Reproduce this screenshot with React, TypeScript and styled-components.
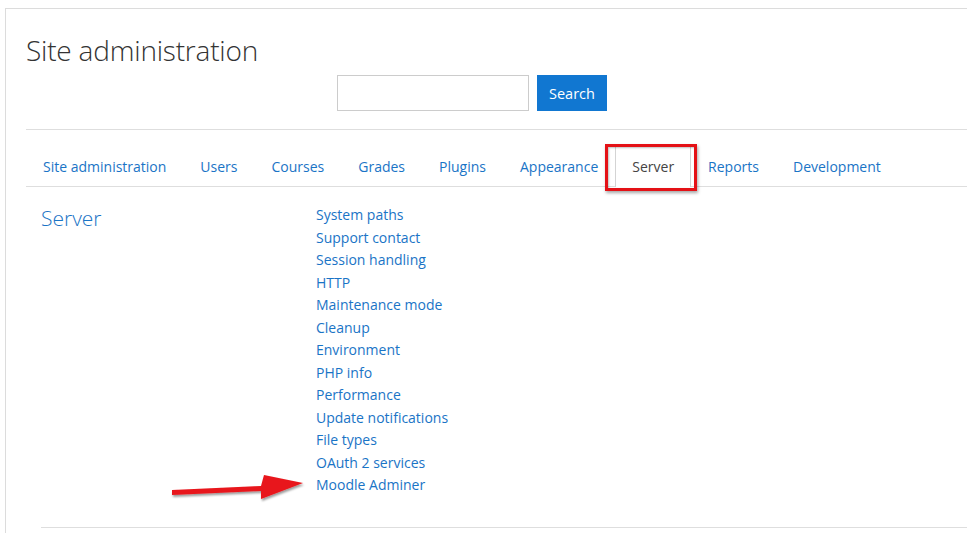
import React, { FC } from "react";
import styled, { createGlobalStyle } from "styled-components";

const GlobalStyle = createGlobalStyle`
  html, body {
    margin: 0;
    padding: 0;
    background: #fff;
    font-family: "Open Sans", "Liberation Sans", sans-serif;
    color: #373a3c;
    overflow: hidden;
  }
`;

const Card = styled.div`
  margin: 8px 0 0 5px;
  border-top: 1px solid #dcdcdc;
  border-left: 1px solid #dcdcdc;
  padding: 0 0 0 20px;
  height: 540px;
`;

const Title = styled.h1`
  margin: 0;
  padding-top: 23px;
  font-size: 28px;
  font-weight: 300;
  line-height: 36px;
  color: #333;
  letter-spacing: -0.2px;
`;

const SearchRow = styled.form`
  display: flex;
  gap: 8px;
  margin: 7px 0 0 311px;
  height: 36px;
`;

const SearchInput = styled.input`
  width: 192px;
  height: 36px;
  box-sizing: border-box;
  border: 1px solid #ccc;
  padding: 0 8px;
`;

const SearchButton = styled.button`
  width: 70px;
  height: 36px;
  border: none;
  background: #1177d1;
  color: #fff;
  font-family: inherit;
  font-size: 14.5px;
  cursor: pointer;
`;

const Tabs = styled.ul`
  list-style: none;
  margin: 18px 0 0;
  padding: 16px 0 0;
  display: flex;
  border-top: 1px solid #dedede;
  border-bottom: 1px solid #dedede;
`;

const Tab = styled.li<{ active?: boolean }>`
  position: relative;
  height: ${(p) => (p.active ? "41px" : "40px")};
  box-sizing: border-box;
  display: flex;
  align-items: center;
  padding: 0 16px ${(p) => (p.active ? "1px" : "0")};
  font-size: 14px;
  color: ${(p) => (p.active ? "#444" : "#1a74c6")};
  background: ${(p) => (p.active ? "#fff" : "transparent")};
  border: 1px solid ${(p) => (p.active ? "#d4d4d4" : "transparent")};
  border-bottom: none;
  margin-bottom: ${(p) => (p.active ? "-1px" : "0")};
  white-space: nowrap;
`;

const Highlight = styled.span`
  position: absolute;
  left: -11px;
  right: -7px;
  top: -3px;
  bottom: -4px;
  border: 3px solid #e41116;
  box-shadow: 1px 2px 3px rgba(0, 0, 0, 0.35), inset 1px 1px 2px rgba(0, 0, 0, 0.25);
  pointer-events: none;
`;

const Section = styled.section`
  position: relative;
  display: grid;
  grid-template-columns: 275px 1fr;
  margin: 0 0 0 15px;
  padding: 17px 0 30px;
  border-bottom: 1px solid #dedede;
`;

const SectionTitle = styled.h2`
  margin: 0;
  font-size: 21px;
  font-weight: 300;
  line-height: 28px;
  color: #1a74c6;
`;

const LinkList = styled.ul`
  list-style: none;
  margin: 0;
  padding: 0;
`;

const LinkItem = styled.li`
  font-size: 14px;
  line-height: 22.5px;
  color: #1a74c6;
`;

const Arrow = styled.svg`
  position: absolute;
  left: 128px;
  top: 283px;
`;

const tabs = [
  "Site administration",
  "Users",
  "Courses",
  "Grades",
  "Plugins",
  "Appearance",
  "Server",
  "Reports",
  "Development",
];

const links = [
  "System paths",
  "Support contact",
  "Session handling",
  "HTTP",
  "Maintenance mode",
  "Cleanup",
  "Environment",
  "PHP info",
  "Performance",
  "Update notifications",
  "File types",
  "OAuth 2 services",
  "Moodle Adminer",
];

const App: FC = () => {
  return (
    <>
      <GlobalStyle />
      <Card>
        <Title>Site administration</Title>
        <SearchRow onSubmit={(e) => e.preventDefault()}>
          <SearchInput type="text" />
          <SearchButton type="submit">Search</SearchButton>
        </SearchRow>
        <Tabs>
          {tabs.map((t) => (
            <Tab key={t} active={t === "Server"}>
              {t}
              {t === "Server" && <Highlight />}
            </Tab>
          ))}
        </Tabs>
        <Section>
          <SectionTitle>Server</SectionTitle>
          <LinkList>
            {links.map((l) => (
              <LinkItem key={l}>{l}</LinkItem>
            ))}
          </LinkList>
          <Arrow width="140" height="34" viewBox="0 0 140 34">
            <defs>
              <filter id="sh" x="-10%" y="-30%" width="130%" height="170%">
                <feDropShadow dx="1" dy="2" stdDeviation="1.2" floodColor="#000" floodOpacity="0.4" />
              </filter>
            </defs>
            <path
              d="M3 20 L92 16 L95 5 L134 13 L92 29 L92 21 L3 25 Z"
              fill="#e8161b"
              filter="url(#sh)"
            />
          </Arrow>
        </Section>
      </Card>
    </>
  );
};

export default App;
